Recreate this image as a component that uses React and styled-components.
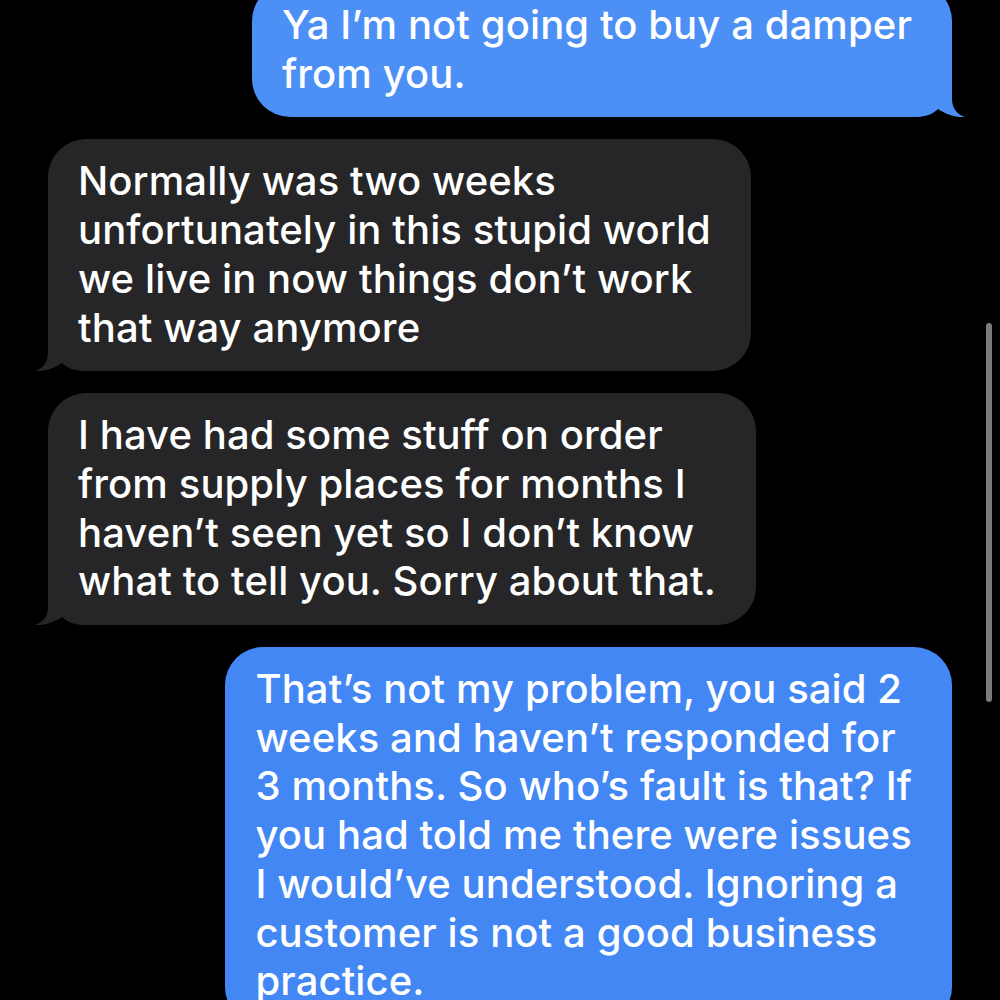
import React from "react";
import styled, { createGlobalStyle } from "styled-components";

const GlobalStyle = createGlobalStyle`
  html, body {
    margin: 0;
    padding: 0;
    background: #000;
  }
  body {
    font-family: Inter, "Noto Sans", "Liberation Sans", sans-serif;
  }
`;

const Screen = styled.div`
  position: relative;
  width: 1000px;
  height: 1000px;
  overflow: hidden;
  background: #000;
`;

const Thread = styled.div`
  display: flex;
  flex-direction: column;
  gap: 22px;
  padding: 0 48px 0 48px;
  margin-top: -17px;
`;

const Row = styled.div`
  display: flex;
  justify-content: ${(p) => (p.$me ? "flex-end" : "flex-start")};
`;

const Bubble = styled.div`
  position: relative;
  isolation: isolate;
  width: fit-content;
  background: ${(p) => p.$color};
  color: #fff;
  border-radius: 38px;
  padding: 18px 40px 19px 30px;
  font-size: 40px;
  font-weight: 500;
  line-height: 48.7px;
  letter-spacing: 0.1px;
  white-space: pre-line;
`;

const Tail = styled.svg`
  position: absolute;
  z-index: -1;
  bottom: 0;
  width: 50px;
  height: 40px;
  ${(p) =>
    p.$me
      ? "right: -13px; transform: scaleX(-1);"
      : "left: -13px;"}
`;

const Scrollbar = styled.div`
  position: absolute;
  left: 986px;
  top: 323px;
  width: 6px;
  height: 379px;
  border-radius: 3px;
  background: #7b7b7b;
`;

const BubbleTail = ({ me, color }) => (
  <Tail $me={me} viewBox="0 0 50 40">
    <path
      d="M13 0 L13 22 C13 32 7 38 0 40 C9 40.6 19 37.5 27 32 C33 38 41 40 50 40 L50 0 Z"
      fill={color}
    />
  </Tail>
);

const messages = [
  {
    me: true,
    color: "#4c90f6",
    text: "Ya I\u2019m not going to buy a damper\nfrom you.",
  },
  {
    me: false,
    color: "#262628",
    text:
      "Normally was two weeks\nunfortunately in this stupid world\nwe live in now things don\u2019t work\nthat way anymore",
  },
  {
    me: false,
    color: "#262628",
    text:
      "I have had some stuff on order\nfrom supply places for months I\nhaven\u2019t seen yet so I don\u2019t know\nwhat to tell you. Sorry about that.",
  },
  {
    me: true,
    color: "#4387f5",
    text:
      "That\u2019s not my problem, you said 2\nweeks and haven\u2019t responded for\n3 months. So who\u2019s fault is that? If\nyou had told me there were issues\nI would\u2019ve understood. Ignoring a\ncustomer is not a good business\npractice.",
  },
];

export default function App() {
  return (
    <Screen>
      <GlobalStyle />
      <Thread>
        {messages.map((m, i) => (
          <Row key={i} $me={m.me}>
            <Bubble $color={m.color}>
              {m.text}
              {i !== 3 && <BubbleTail me={m.me} color={m.color} />}
            </Bubble>
          </Row>
        ))}
      </Thread>
      <Scrollbar />
    </Screen>
  );
}
